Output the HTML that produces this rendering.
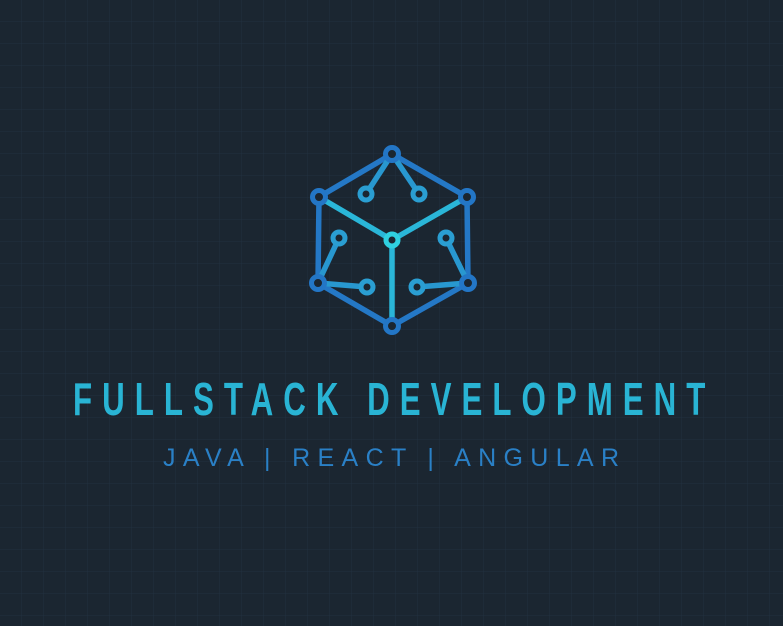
<!DOCTYPE html>
<html><head><meta charset="utf-8"><style>
html,body{margin:0;padding:0;background:#1b2631;}
svg{display:block}
</style></head><body>
<svg width="783" height="626" viewBox="0 0 783 626" xmlns="http://www.w3.org/2000/svg">
<defs>
<pattern id="g" width="22" height="22" patternUnits="userSpaceOnUse">
<path d="M22 0V22H0" fill="none" stroke="#213040" stroke-width="1"/>
</pattern>
</defs>
<rect width="783" height="626" fill="#1b2631"/>
<rect width="783" height="626" fill="url(#g)"/>
<g fill="none" stroke-width="5.5" stroke-linecap="round">
<path d="M392 154L467 197L468 283L392 326L318 283L319 197Z" stroke="#2478c6"/>
<path d="M319 197L392 240L467 197M392 240V326" stroke="#2ab6d8"/>
<path d="M392 154L366 194M392 154L419 194M318 283L339 238M318 283L367 287M468 283L446 238M468 283L417 287" stroke="#2898d0"/>
</g>
<g stroke-width="5" fill="#1b2631">
<circle cx="392" cy="154" r="6.5" stroke="#2376c6"/>
<circle cx="319" cy="197" r="6.5" stroke="#2376c6"/>
<circle cx="467" cy="197" r="6.5" stroke="#2376c6"/>
<circle cx="318" cy="283" r="6.5" stroke="#2376c6"/>
<circle cx="468" cy="283" r="6.5" stroke="#2376c6"/>
<circle cx="392" cy="326" r="6.5" stroke="#2376c6"/>
<circle cx="392" cy="240" r="6" stroke="#2fd0e0"/>
<circle cx="366" cy="194" r="6" stroke="#2a9ed2"/>
<circle cx="419" cy="194" r="6" stroke="#2a9ed2"/>
<circle cx="339" cy="238" r="6" stroke="#2a9ed2"/>
<circle cx="446" cy="238" r="6" stroke="#2a9ed2"/>
<circle cx="367" cy="287" r="6" stroke="#2a9ed2"/>
<circle cx="417" cy="287" r="6" stroke="#2a9ed2"/>
</g>
<g transform="translate(73,415) scale(0.68,1)">
<text x="0" y="0" font-family="'Liberation Sans',sans-serif" font-weight="bold" font-size="46" fill="#29b4d4" textLength="930" lengthAdjust="spacing">FULLSTACK DEVELOPMENT</text>
</g>
<text x="163" y="466" font-family="'Liberation Sans',sans-serif" font-size="25" fill="#2a80c6" textLength="456" lengthAdjust="spacing">JAVA | REACT | ANGULAR</text>
</svg>
</body></html>
